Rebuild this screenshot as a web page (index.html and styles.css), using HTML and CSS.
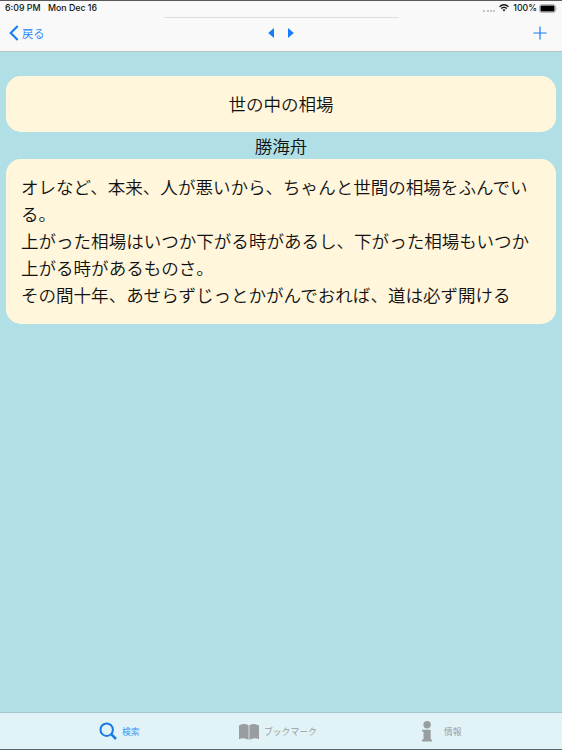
FILE: index.html
```html
<!DOCTYPE html>
<html lang="ja">
<head>
  <meta charset="UTF-8" />
  <meta name="viewport" content="width=device-width, initial-scale=1.0" />
  <title>世の中の相場</title>
  <link rel="stylesheet" href="styles.css">
</head>
<body>
  <div class="app">
    <header class="header">
      <div class="status">
        <span class="time">6:09 PM</span>
        <span class="day">Mon Dec 16</span>
        <span class="signal"><i></i><i></i><i></i><i></i></span>
        <svg class="wifi" width="10" height="8" viewBox="0 0 10 8" fill="none" stroke="#111" stroke-width="1.3">
          <path d="M0.5 2.8 Q5 -1.2 9.5 2.8" />
          <path d="M2.2 4.6 Q5 2.2 7.8 4.6" />
          <path d="M3.5 5.8 Q5 4.7 6.5 5.8 L5 7.5 Z" fill="#111" stroke="none" />
        </svg>
        <span class="percent">100%</span>
        <svg class="battery" width="19" height="9" viewBox="0 0 19 9">
          <rect x="0.5" y="0.5" width="16" height="8" rx="2.2" fill="#fff" stroke="#a5a5a7" stroke-width="0.8" />
          <rect x="1.5" y="1.4" width="14" height="6.2" rx="1.2" fill="#000" />
          <path d="M17.5 3 Q18.8 4.5 17.5 6 Z" fill="#a5a5a7" />
        </svg>
      </div>
      <div class="grabber"></div>
      <nav class="navbar">
        <a class="back">
          <svg width="10" height="16" viewBox="0 0 10 16" fill="none" stroke="#157efb" stroke-width="2.1">
            <path d="M8.7 1 L1.7 8 L8.7 15" />
          </svg>
          <span>戻る</span>
        </a>
        <div class="pager">
          <svg width="6" height="10" viewBox="0 0 6 10"><path d="M6 0 V10 L0.2 5 Z" fill="#157efb" /></svg>
          <svg width="6" height="10" viewBox="0 0 6 10"><path d="M0 0 V10 L5.8 5 Z" fill="#157efb" /></svg>
        </div>
        <svg class="add" width="14" height="14" viewBox="0 0 14 14" stroke="#157efb" stroke-width="1.2">
          <path d="M7 0.5 V13.5 M0.5 7 H13.5" />
        </svg>
      </nav>
    </header>

    <main class="content">
      <h1 class="card title">世の中の相場</h1>
      <p class="author">勝海舟</p>
      <p class="card quote">オレなど、本来、人が悪いから、ちゃんと世間の相場をふんでいる。<br>上がった相場はいつか下がる時があるし、下がった相場もいつか上がる時があるものさ。<br>その間十年、あせらずじっとかがんでおれば、道は必ず開ける</p>
    </main>

    <footer class="tabbar">
      <a class="tab search">
        <svg width="19" height="19" viewBox="0 0 19 19" fill="none" stroke="#177be5" stroke-width="2">
          <circle cx="7.7" cy="7.7" r="6.2" />
          <path d="M12.2 12.2 L17 17" stroke-width="2.5" />
        </svg>
        <span>検索</span>
      </a>
      <a class="tab bookmark">
        <svg width="20" height="16" viewBox="0 0 20 16" fill="#999da0">
          <path d="M0 1.5 Q5 -1.3 9.6 1.3 V15.8 Q5 13 0 15.2 Z" />
          <path d="M20 1.5 Q15 -1.3 10.4 1.3 V15.8 Q15 13 20 15.2 Z" />
        </svg>
        <span>ブックマーク</span>
      </a>
      <a class="tab info">
        <svg width="10" height="21" viewBox="0 0 10 21" fill="#999da0">
          <circle cx="5.1" cy="3.8" r="3.7" />
          <path d="M0 8.8 H8.7 V18.6 H10 V20.6 H0 V18.6 H1.5 V10.6 H0 Z" />
        </svg>
        <span>情報</span>
      </a>
    </footer>
  </div>
</body>
</html>
```

FILE: styles.css
```css
body {
  margin: 0;
  background: #b0e0e6;
  color: #111;
  font-family: "Noto Sans CJK JP", sans-serif;
}

.app {
  height: 750px;
  box-sizing: border-box;
  border-top: 1px solid #5b595b;
  border-bottom: 1px solid #53686c;
  display: flex;
  flex-direction: column;
  overflow: hidden;
}

.header {
  height: 51px;
  box-sizing: border-box;
  background: #f9f9f9;
  border-bottom: 1px solid #b3c3c6;
  flex-shrink: 0;
}

.status {
  height: 14px;
  padding: 0 4px 0 5px;
  display: flex;
  align-items: center;
  font-family: Inter, sans-serif;
  font-size: 8.8px;
  font-weight: 500;
  line-height: 14px;
  white-space: nowrap;
}

.day {
  margin-left: 7.5px;
}

.signal {
  display: flex;
  gap: 1.3px;
  margin: 5px 4px 0 auto;
}

.signal i {
  width: 2px;
  height: 2px;
  border-radius: 50%;
  background: #b5b5b7;
}

.percent {
  margin: 0 2px 0 4px;
}

.grabber {
  width: 235px;
  height: 1px;
  margin: 2px auto 0;
  background: #dedede;
}

.navbar {
  height: 30px;
  padding: 0 15px 0 9px;
  display: flex;
  align-items: center;
  justify-content: space-between;
  color: #157efb;
}

.back {
  width: 120px;
  display: flex;
  align-items: center;
  gap: 3px;
  font-size: 11.3px;
  font-weight: 350;
  line-height: 16px;
}

.pager {
  display: flex;
  gap: 14px;
}

.add {
  margin-left: 100px;
}

.content {
  flex-grow: 1;
  padding: 24px 6px 0;
  font-size: 17.55px;
  font-weight: 350;
  line-height: 27px;
}

.card {
  background: #fff6dc;
  border-radius: 15px;
}

.title {
  margin: 0;
  padding: 13.5px 14.5px 15.5px;
  font-size: inherit;
  font-weight: inherit;
  text-align: center;
}

.author {
  margin: 0;
  text-align: center;
}

.quote {
  margin: 0;
  padding: 14px 15px 16px;
}

.tabbar {
  height: 37px;
  box-sizing: border-box;
  border-top: 1px solid #a5c7cd;
  background: #e1f3f7;
  display: grid;
  grid-template-columns: 188px 186px 188px;
  flex-shrink: 0;
}

.tab {
  display: flex;
  align-items: center;
  padding-top: 1px;
  color: #999da0;
  font-size: 8.8px;
  line-height: 14px;
}

.search {
  padding-left: 99px;
  gap: 4px;
  color: #3a94f5;
}

.bookmark {
  padding-left: 51px;
  gap: 5px;
}

.info {
  padding-left: 48px;
  gap: 12px;
}
```
